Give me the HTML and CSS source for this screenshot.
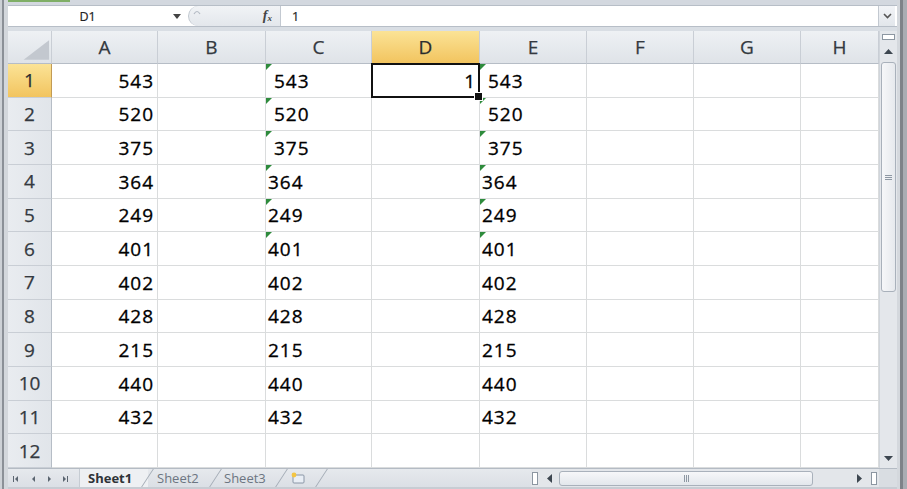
FILE: index.html
```html
<!DOCTYPE html>
<html>
<head>
<meta charset="utf-8">
<link rel="stylesheet" href="styles.css">
</head>
<body>
<div class="app">
  <div class="edge-l"></div>
  <div class="center">
    <div class="topstrip"><div class="ribbon-edge"></div></div>
    <div class="fbar">
      <div class="namebox"><span class="nb-text">D1</span><span class="nb-arrow"><svg width="8" height="5" viewBox="0 0 8 5"><path d="M0 0H8L4 5Z" fill="#444"/></svg></span></div>
      <div class="fxzone">
        <svg class="arc" width="8" height="6" viewBox="0 0 8 6"><path d="M1 5Q4 0 7 5" fill="none" stroke="#b3bac3" stroke-width="1.2"/></svg>
        <span class="fx">f<sub>x</sub></span>
      </div>
      <div class="finput">1</div>
      <div class="fexpand"><svg width="9" height="6" viewBox="0 0 9 6"><path d="M1 1L4.5 4.5L8 1" fill="none" stroke="#555" stroke-width="1.6"/></svg></div>
    </div>
    <div class="fgap"></div>
    <div class="sheet">
      <div class="grid">
        <div class="h corner"><svg width="44" height="33" viewBox="0 0 44 33"><path d="M16 29H42V9Z" fill="#c3c8cf"/></svg></div>
        <div class="h">A</div><div class="h">B</div><div class="h">C</div><div class="h on">D</div><div class="h">E</div><div class="h">F</div><div class="h">G</div><div class="h">H</div>

        <div class="rh on">1</div><div class="c n">543</div><div class="c"></div><div class="c t err"> 543</div><div class="c n sel">1</div><div class="c t err"> 543</div><div class="c"></div><div class="c"></div><div class="c"></div>
        <div class="rh">2</div><div class="c n">520</div><div class="c"></div><div class="c t err"> 520</div><div class="c"></div><div class="c t err"> 520</div><div class="c"></div><div class="c"></div><div class="c"></div>
        <div class="rh">3</div><div class="c n">375</div><div class="c"></div><div class="c t err"> 375</div><div class="c"></div><div class="c t err"> 375</div><div class="c"></div><div class="c"></div><div class="c"></div>
        <div class="rh">4</div><div class="c n">364</div><div class="c"></div><div class="c t err">364</div><div class="c"></div><div class="c t err">364</div><div class="c"></div><div class="c"></div><div class="c"></div>
        <div class="rh">5</div><div class="c n">249</div><div class="c"></div><div class="c t err">249</div><div class="c"></div><div class="c t err">249</div><div class="c"></div><div class="c"></div><div class="c"></div>
        <div class="rh">6</div><div class="c n">401</div><div class="c"></div><div class="c t err">401</div><div class="c"></div><div class="c t err">401</div><div class="c"></div><div class="c"></div><div class="c"></div>
        <div class="rh">7</div><div class="c n">402</div><div class="c"></div><div class="c t">402</div><div class="c"></div><div class="c t">402</div><div class="c"></div><div class="c"></div><div class="c"></div>
        <div class="rh">8</div><div class="c n">428</div><div class="c"></div><div class="c t">428</div><div class="c"></div><div class="c t">428</div><div class="c"></div><div class="c"></div><div class="c"></div>
        <div class="rh">9</div><div class="c n">215</div><div class="c"></div><div class="c t">215</div><div class="c"></div><div class="c t">215</div><div class="c"></div><div class="c"></div><div class="c"></div>
        <div class="rh">10</div><div class="c n">440</div><div class="c"></div><div class="c t">440</div><div class="c"></div><div class="c t">440</div><div class="c"></div><div class="c"></div><div class="c"></div>
        <div class="rh">11</div><div class="c n">432</div><div class="c"></div><div class="c t">432</div><div class="c"></div><div class="c t">432</div><div class="c"></div><div class="c"></div><div class="c"></div>
        <div class="rh">12</div><div class="c"></div><div class="c"></div><div class="c"></div><div class="c"></div><div class="c"></div><div class="c"></div><div class="c"></div><div class="c"></div>
      </div>
      <div class="vscroll">
        <div class="vsplit"><div class="vsplit-box"></div></div>
        <div class="vbtn"><svg width="9" height="5" viewBox="0 0 9 5"><path d="M0 5H9L4.5 0Z" fill="#3d4650"/></svg></div>
        <div class="vtrack"><div class="vthumb"><div class="vgrip"></div></div></div>
        <div class="vbtn"><svg width="9" height="5" viewBox="0 0 9 5"><path d="M0 0H9L4.5 5Z" fill="#3d4650"/></svg></div>
      </div>
    </div>
    <div class="tabbar">
      <div class="nav">
        <svg width="72" height="19" viewBox="0 0 72 19">
          <g fill="#5b6570">
            <rect x="5" y="7" width="1" height="6"/><path d="M10 7V13L7 10Z"/>
            <path d="M27 7V13L24 10Z"/>
            <path d="M40 7V13L43 10Z"/>
            <path d="M55 7V13L58 10Z"/><rect x="59" y="7" width="1" height="6"/>
          </g>
        </svg>
      </div>
      <div class="tabs">
        <div class="tab active">Sheet1</div>
        <div class="tab t2">Sheet2</div>
        <div class="tab t3">Sheet3</div>
        <div class="tab tins"><svg width="16" height="12" viewBox="0 0 16 12"><rect x="3" y="3" width="11" height="8" rx="1" fill="#e9eef5" stroke="#8a96a6"/><circle cx="4" cy="3" r="2.4" fill="#f4c542"/></svg></div>
      </div>
      <div class="spacer"></div>
      <div class="hscroll">
        <div class="hsplit"><div class="hsplit-box"></div></div>
        <div class="hbtn"><svg width="5" height="9" viewBox="0 0 5 9"><path d="M5 0V9L0 4.5Z" fill="#3d4650"/></svg></div>
        <div class="htrack"><div class="hthumb"><div class="hgrip"></div></div></div>
        <div class="hbtn"><svg width="5" height="9" viewBox="0 0 5 9"><path d="M0 0V9L5 4.5Z" fill="#3d4650"/></svg></div>
        <div class="hend"><div class="hsplit-box"></div></div>
      </div>
      <div class="corner-br"></div>
    </div>
    <div class="bottomstrip"></div>
  </div>
  <div class="edge-r"></div>
</div>
</body>
</html>
```
FILE: styles.css
```css
* { box-sizing: border-box; margin: 0; padding: 0; }
body { width: 907px; height: 489px; overflow: hidden; font-family: "Open Sans", "DejaVu Sans", sans-serif; background: #d9dee5; }
.app { display: flex; width: 907px; height: 489px; background: #d6dbe2; }
.edge-l { width: 8px; flex: none; background: linear-gradient(to right, #cdd1d6 0 2px, #8b9097 2px 4px, #d3d7dc 4px); }
.edge-r { width: 10px; flex: none; background: linear-gradient(to right, #d4d8dd 0 3px, #7e8389 3px 6px, #a9adb3 6px); }
.center { flex: 1; display: flex; flex-direction: column; min-width: 0; }

.topstrip { height: 5px; flex: none; background: #d3d8df; }
.ribbon-edge { width: 62px; height: 2px; background: #7fae66; }

.fbar { height: 22px; flex: none; display: flex; background: #fff; border-top: 1px solid #b7bec7; border-bottom: 1px solid #b7bec7; }
.namebox { width: 180px; display: flex; align-items: center; }
.nb-text { flex: 1; text-align: center; font-size: 12.5px; color: #222; padding-left: 1px; -webkit-text-stroke: 0.2px #222; }
.nb-arrow { width: 22px; display: flex; justify-content: center; align-items: center; }
.fxzone { width: 93px; display: flex; align-items: center; justify-content: space-between; background: linear-gradient(#f1f3f6, #e3e7ec); border-left: 1px solid #bfc6ce; border-radius: 11px 0 0 11px; border-right: 1px solid #c3c9d1; padding: 0 8px 0 4px; }
.arc { margin-top: -9px; }
.fx { font-family: "Liberation Serif", serif; font-style: italic; font-weight: bold; font-size: 14px; color: #444; }
.fx sub { font-size: 9px; vertical-align: -1px; }
.finput { flex: 1; font-size: 12.5px; color: #222; padding-left: 11px; display: flex; align-items: center; -webkit-text-stroke: 0.2px #222; }
.fexpand { width: 17px; margin-right: 2px; border-left: 1px solid #c2c8d0; background: linear-gradient(#f2f4f7, #e2e6eb); display: flex; align-items: center; justify-content: center; }
.fgap { height: 4px; flex: none; background: #d9dee4; }

.sheet { height: 437px; flex: none; display: flex; }
.grid { width: 871px; display: grid; grid-template-columns: 44px 106px 108px 106px 108px 107px 107px 107px 78px; grid-template-rows: 33px repeat(12, 1fr); background: #fff; overflow: hidden; }
.c { border-right: 1px solid #dadcdd; border-bottom: 1px solid #dadcdd; font-size: 19px; letter-spacing: 1px; color: #000; -webkit-text-stroke: 0.3px #000; display: flex; align-items: center; position: relative; padding: 1px 4px 0 2px; white-space: pre; }
.n { justify-content: flex-end; padding-right: 3px; }
.err::before { content: ""; position: absolute; top: 0; left: 0; border-top: 6px solid #2e8b3c; border-right: 6px solid transparent; }
.sel::after { content: ""; position: absolute; left: -1px; top: -1px; right: -1px; bottom: -1px; border: 2px solid #111; pointer-events: none; }
.sel::before { content: ""; position: absolute; right: -4px; bottom: -4px; width: 7px; height: 7px; background: #111; border: 1px solid #fff; z-index: 2; }

.h, .rh { background: linear-gradient(#eef1f4, #dfe3e8); color: #343940; -webkit-text-stroke: 0.25px #343940; font-size: 19px; display: flex; align-items: center; justify-content: center; }
.h { border-right: 1px solid #c9ced5; border-bottom: 1px solid #b6bdc6; }
.rh { border-right: 1px solid #b6bdc6; border-bottom: 1px solid #c9ced5; background: linear-gradient(to right, #e9ecf0, #e1e5ea); }
.h.on { background: linear-gradient(#fbe396, #f2c45f); border-bottom-color: #c29b55; color: #2a2a2a; }
.rh.on { background: linear-gradient(#fbe396, #f2c45f); border-right-color: #c29b55; color: #2a2a2a; }
.corner { align-items: stretch; justify-content: stretch; }

.vscroll { width: 18px; display: flex; flex-direction: column; background: #e4e7eb; border-left: 1px solid #d0d5db; }
.vsplit { height: 12px; display: flex; align-items: center; justify-content: center; }
.vsplit-box { width: 13px; height: 6px; border: 1px solid #8c96a1; background: #fff; }
.vbtn { height: 16px; display: flex; align-items: center; justify-content: center; }
.vtrack { flex: 1; padding: 3px 1px 0 1px; }
.vthumb { height: 230px; border: 1px solid #a9b1bb; border-radius: 3px; background: linear-gradient(to right, #f6f7f9, #e6e9ed); display: flex; align-items: center; justify-content: center; }
.vgrip { width: 7px; height: 5px; border-top: 1px solid #8e98a3; border-bottom: 1px solid #8e98a3; background: linear-gradient(#8e98a3, #8e98a3) center / 7px 1px no-repeat; }
.vscroll > .vbtn:last-child { margin-bottom: 2px; }

.tabbar { height: 19px; flex: none; display: flex; background: linear-gradient(#e6e9ed, #dbdfe5); border-top: 1px solid #b4bbc4; }
.nav { width: 72px; border-right: 1px solid #c6ccd3; }
.tabs { display: flex; }
.tab { position: relative; display: flex; align-items: center; font-size: 13px; color: #6c7581; }
.tab::after { content: ""; position: absolute; right: 0; top: 0; bottom: 0; width: 1px; background: #a3abb5; transform: skewX(-33deg); }
.tab.active { width: 68px; padding-left: 8px; font-weight: bold; color: #2f3338; background: #eef0f3; }
.tab.t2 { width: 68px; padding-left: 9px; }
.tab.t3 { width: 66px; padding-left: 8px; }
.tab.tins { width: 40px; padding-left: 8px; }
.spacer { flex: 1; }
.hscroll { width: 348px; display: flex; align-items: center; background: #e3e6ea; }
.hsplit, .hend { width: 8px; display: flex; justify-content: center; }
.hend { width: 10px; }
.hsplit-box { width: 6px; height: 13px; border: 1px solid #8c96a1; background: #fff; }
.hbtn { width: 20px; height: 17px; display: flex; align-items: center; justify-content: center; }
.htrack { flex: 1; height: 17px; padding: 1px 0; }
.hthumb { width: 254px; height: 100%; border: 1px solid #a9b1bb; border-radius: 3px; background: linear-gradient(#f6f7f9, #e3e7ec); display: flex; align-items: center; justify-content: center; }
.hgrip { width: 5px; height: 7px; border-left: 1px solid #8e98a3; border-right: 1px solid #8e98a3; background: linear-gradient(#8e98a3, #8e98a3) center / 1px 7px no-repeat; }
.corner-br { width: 18px; background: #d9dde2; }
.bottomstrip { height: 2px; flex: none; background: #c7ccd3; }
```
